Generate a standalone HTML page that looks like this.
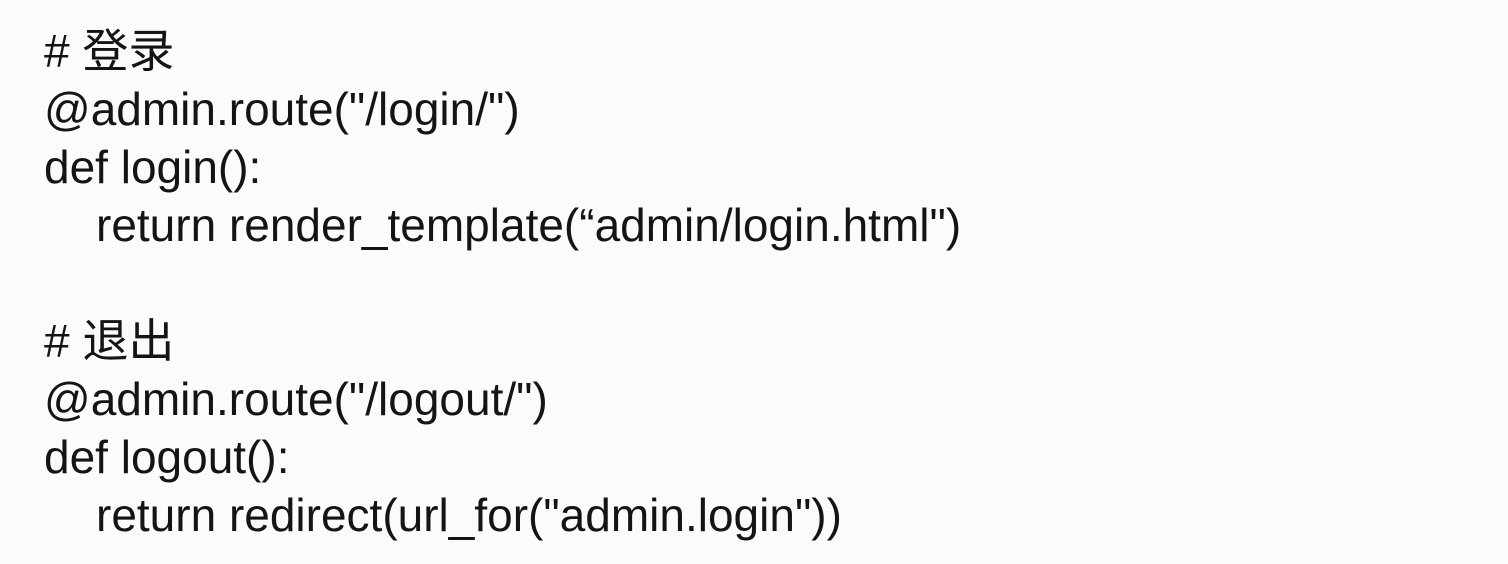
<!DOCTYPE html>
<html><head><meta charset="utf-8"><style>
html,body{margin:0;padding:0;background:#fbfbfb;width:1508px;height:564px;overflow:hidden}
.c{position:absolute;left:44px;top:22px;font-family:"Liberation Sans","Noto Sans CJK SC",sans-serif;font-size:46px;line-height:58px;color:#141414;white-space:pre;letter-spacing:0px}
.i{padding-left:52px}
</style></head><body>
<div class="c"><div># 登录</div><div>@admin.route("/login/")</div><div>def login():</div><div class="i">return render_template(“admin/login.html")</div><div>&nbsp;</div><div># 退出</div><div>@admin.route("/logout/")</div><div>def logout():</div><div class="i">return redirect(url_for("admin.login"))</div></div>
</body></html>
